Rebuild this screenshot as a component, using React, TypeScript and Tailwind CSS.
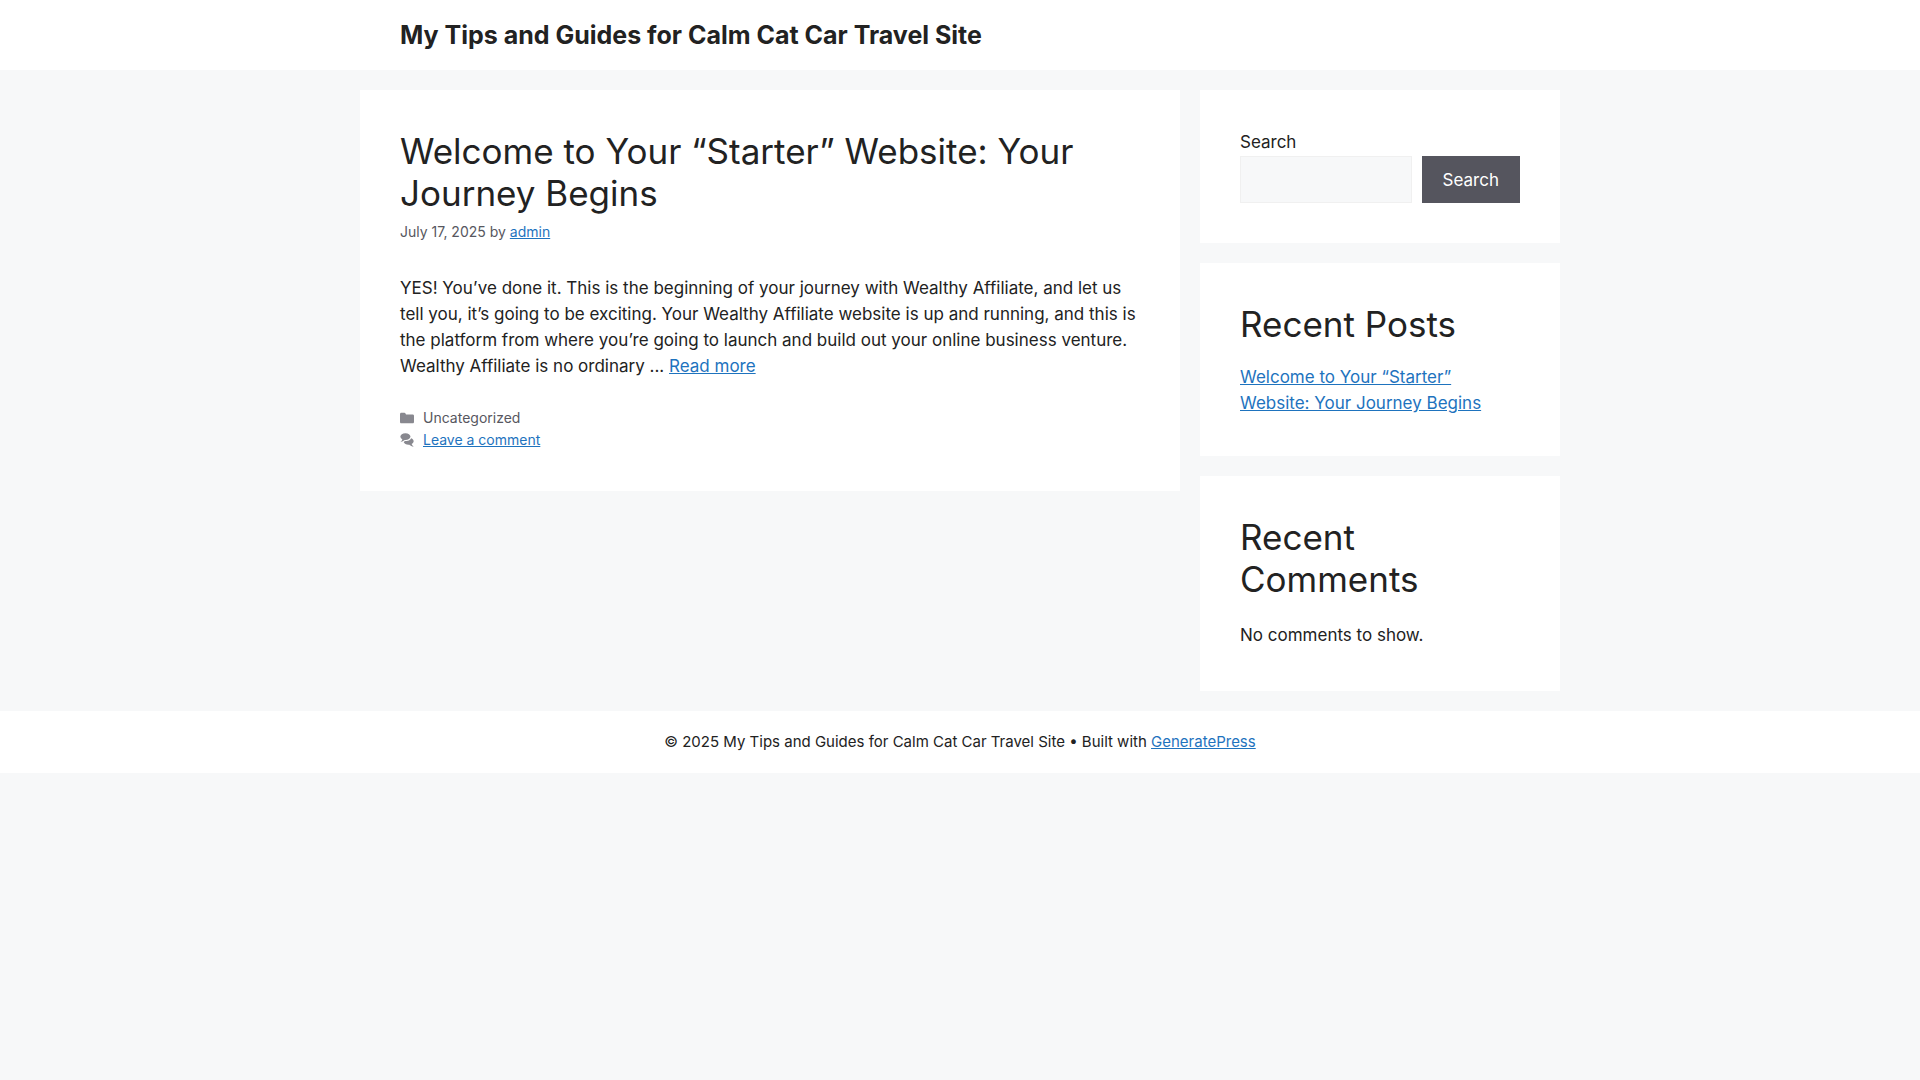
import type { FormEvent, ReactNode } from 'react';

const SITE_TITLE = 'My Tips and Guides for Calm Cat Car Travel Site';
const POST_TITLE = 'Welcome to Your “Starter” Website: Your Journey Begins';

const linkClass = 'text-[#1e73be] underline hover:text-black';

function FolderIcon() {
  return (
    <svg viewBox="0 0 512 512" className="size-[14px] shrink-0 fill-current opacity-70" aria-hidden="true">
      <path d="M0 112c0-26.51 21.49-48 48-48h110.014a48 48 0 0 1 43.592 27.907l12.349 26.791A16 16 0 0 0 228.486 128H464c26.51 0 48 21.49 48 48v224c0 26.51-21.49 48-48 48H48c-26.51 0-48-21.49-48-48V112z" />
    </svg>
  );
}

function CommentsIcon() {
  return (
    <svg viewBox="0 0 512 512" className="size-[14px] shrink-0 fill-current opacity-70" aria-hidden="true">
      <path d="M132.838 329.973a435.298 435.298 0 0 0 16.769-9.004c13.363-7.574 26.587-16.142 37.419-25.507 7.544.597 15.27.925 23.098.925 54.905 0 105.634-15.311 143.285-41.28 23.728-16.365 43.115-37.692 54.155-62.645 54.739 22.205 91.498 63.272 91.498 110.286 0 42.186-29.558 79.498-75.09 102.828 23.46 49.216 75.09 101.709 75.09 101.709s-115.837-38.35-154.424-78.46c-9.956 1.12-20.297 1.758-30.793 1.758-88.727 0-162.927-43.071-181.007-100.61z" />
      <path d="M383.371 132.502c0 70.603-82.961 127.787-185.216 127.787-10.496 0-20.837-.639-30.793-1.757-38.587 40.093-154.424 78.429-154.424 78.429s51.63-52.472 75.09-101.67c-45.532-23.321-75.09-60.619-75.09-102.79C12.938 61.9 95.9 4.716 198.155 4.716 300.41 4.715 383.37 61.9 383.37 132.502z" />
    </svg>
  );
}

function Widget({ title, children }: { title?: string; children: ReactNode }) {
  return (
    <section className="bg-white p-10">
      {title && <h2 className="mb-[19px] text-[35px] leading-[42px]">{title}</h2>}
      {children}
    </section>
  );
}

function SearchForm() {
  const handleSubmit = (e: FormEvent) => e.preventDefault();

  return (
    <form role="search" onSubmit={handleSubmit}>
      <label htmlFor="search" className="block pb-[2px] leading-[24px]">
        Search
      </label>
      <div className="flex gap-[10px]">
        <input
          id="search"
          type="search"
          className="h-[47px] min-w-0 flex-1 border border-[#f0f0f0] bg-[#f7f8f9] px-[15px]"
        />
        <button type="submit" className="h-[47px] bg-[#55555e] px-[21px] text-white hover:bg-[#3f4047]">
          Search
        </button>
      </div>
    </form>
  );
}

export default function App() {
  return (
    <div className="min-h-screen bg-[#f7f8f9] font-['Inter',sans-serif] text-[17px] leading-[26px] text-[#222222]">
      <header className="bg-white">
        <div className="mx-auto max-w-[1200px] px-10 py-5">
          <p className="text-[25px] leading-[30px] font-bold">
            <a href="#">{SITE_TITLE}</a>
          </p>
        </div>
      </header>

      <div className="mx-auto flex max-w-[1200px] flex-col gap-5 py-5 md:flex-row md:items-start">
        <main className="min-w-0 flex-1">
          <article className="bg-white p-10">
            <h2 className="text-[35px] leading-[42px]">
              <a href="#">{POST_TITLE}</a>
            </h2>
            <div className="mt-[7px] text-[14px] leading-[22px] text-[#575760]">
              <time dateTime="2025-07-17">July 17, 2025</time> by{' '}
              <a href="#" className={linkClass}>admin</a>
            </div>

            <p className="mt-8">
              YES! You’ve done it. This is the beginning of your journey with Wealthy Affiliate, and let us tell
              you, it’s going to be exciting. Your Wealthy Affiliate website is up and running, and this is the
              platform from where you’re going to launch and build out your online business venture. Wealthy
              Affiliate is no ordinary ...{' '}
              <a href="#" className={linkClass}>Read more</a>
            </p>

            <footer className="mt-7 text-[14px] leading-[22px] text-[#575760]">
              <div className="flex items-center gap-[9px]">
                <FolderIcon />
                <span>Uncategorized</span>
              </div>
              <div className="flex items-center gap-[9px]">
                <CommentsIcon />
                <a href="#" className={linkClass}>Leave a comment</a>
              </div>
            </footer>
          </article>
        </main>

        <aside className="flex flex-col gap-5 md:w-[30%]">
          <Widget>
            <SearchForm />
          </Widget>
          <Widget title="Recent Posts">
            <ul>
              <li>
                <a href="#" className={linkClass}>{POST_TITLE}</a>
              </li>
            </ul>
          </Widget>
          <Widget title="Recent Comments">
            <p className="leading-[32px]">No comments to show.</p>
          </Widget>
        </aside>
      </div>

      <footer className="bg-white px-10 py-5 text-center text-[15px] leading-[22px]">
        © 2025 {SITE_TITLE} • Built with{' '}
        <a href="#" className={linkClass}>GeneratePress</a>
      </footer>
    </div>
  );
}
